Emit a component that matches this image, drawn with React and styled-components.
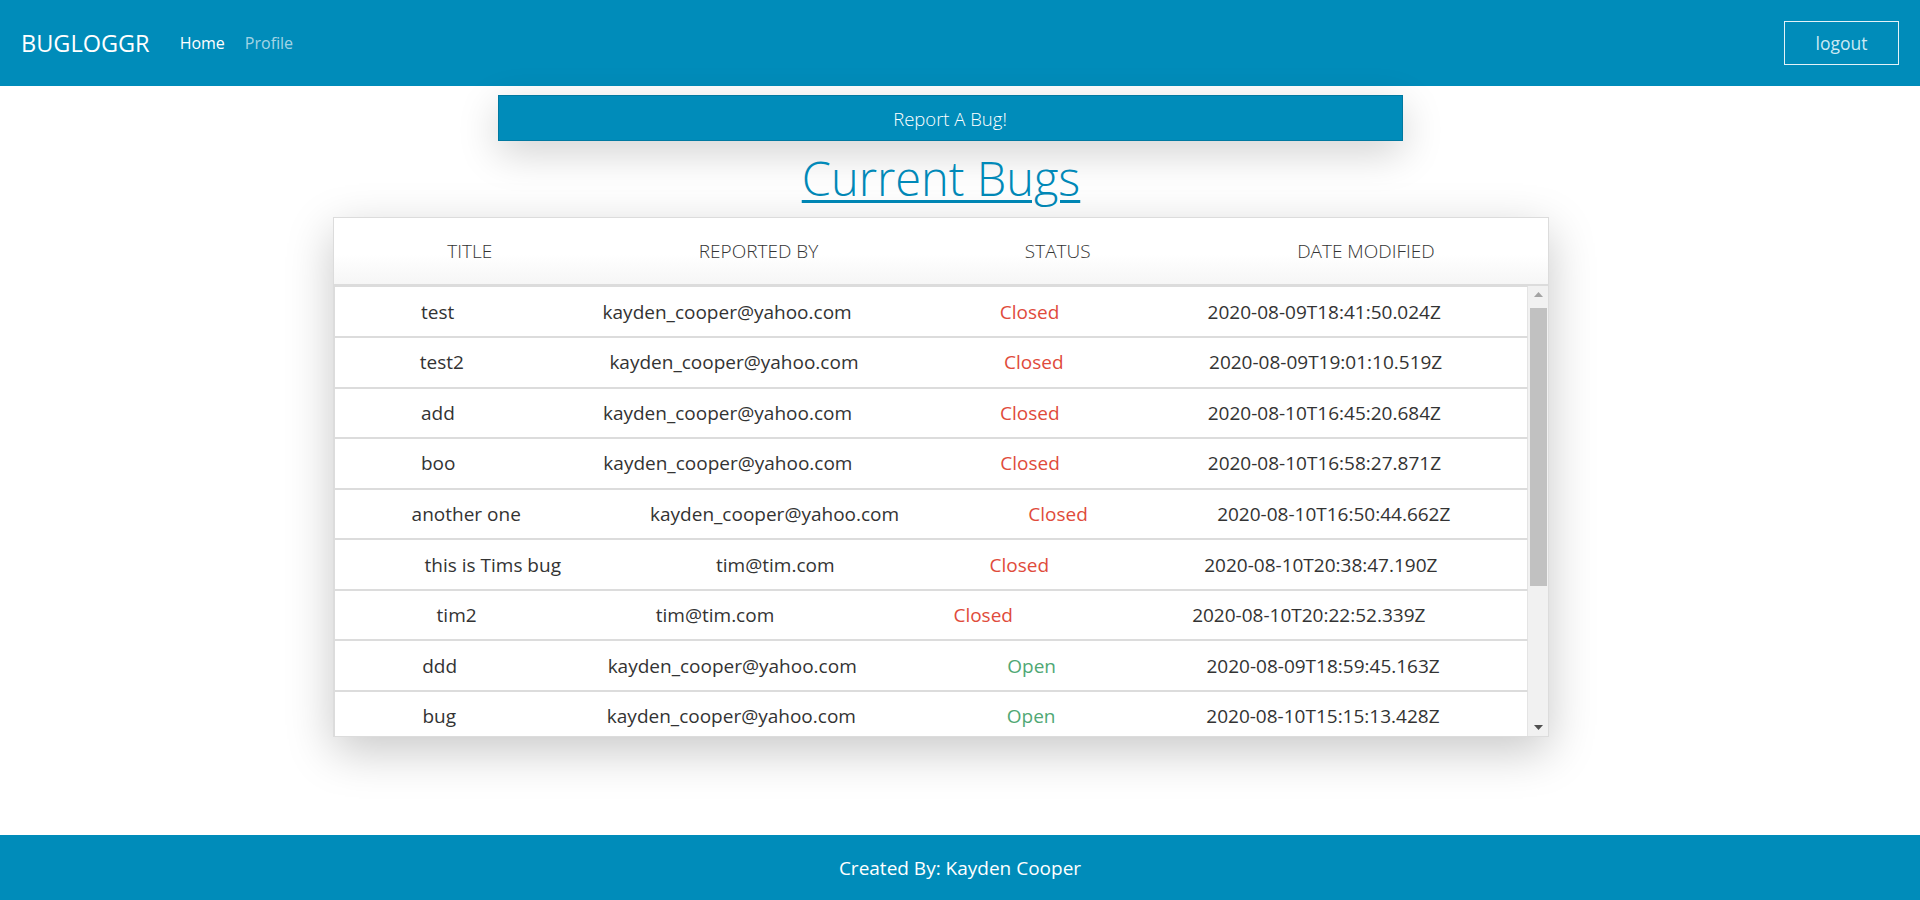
import styled, { createGlobalStyle } from "styled-components";

const bugs = [
  { id: 1, title: "test", reportedBy: "kayden_cooper@yahoo.com", closed: true, modified: "2020-08-09T18:41:50.024Z" },
  { id: 2, title: "test2", reportedBy: "kayden_cooper@yahoo.com", closed: true, modified: "2020-08-09T19:01:10.519Z" },
  { id: 3, title: "add", reportedBy: "kayden_cooper@yahoo.com", closed: true, modified: "2020-08-10T16:45:20.684Z" },
  { id: 4, title: "boo", reportedBy: "kayden_cooper@yahoo.com", closed: true, modified: "2020-08-10T16:58:27.871Z" },
  { id: 5, title: "another one", reportedBy: "kayden_cooper@yahoo.com", closed: true, modified: "2020-08-10T16:50:44.662Z" },
  { id: 6, title: "this is Tims bug", reportedBy: "tim@tim.com", closed: true, modified: "2020-08-10T20:38:47.190Z" },
  { id: 7, title: "tim2", reportedBy: "tim@tim.com", closed: true, modified: "2020-08-10T20:22:52.339Z" },
  { id: 8, title: "ddd", reportedBy: "kayden_cooper@yahoo.com", closed: false, modified: "2020-08-09T18:59:45.163Z" },
  { id: 9, title: "bug", reportedBy: "kayden_cooper@yahoo.com", closed: false, modified: "2020-08-10T15:15:13.428Z" },
];

export default function App() {
  return (
    <>
      <GlobalStyle />
      <Page>
        <Navbar>
          <Brand>BUGLOGGR</Brand>
          <NavLink>Home</NavLink>
          <NavLink muted>Profile</NavLink>
          <LogoutBtn>logout</LogoutBtn>
        </Navbar>

        <Main>
          <ReportBtn>Report A Bug!</ReportBtn>
          <Title>Current Bugs</Title>
          <BugTable>
            <HeadRow>
              <span>Title</span>
              <span>Reported By</span>
              <span>Status</span>
              <span>Date Modified</span>
            </HeadRow>
            <BodyArea>
              <RowList>
                {bugs.map((bug) => (
                  <BugRow key={bug.id}>
                    <span>{bug.title}</span>
                    <span>{bug.reportedBy}</span>
                    <Status closed={bug.closed}>{bug.closed ? "Closed" : "Open"}</Status>
                    <span>{bug.modified}</span>
                  </BugRow>
                ))}
              </RowList>
              <ScrollTrack>
                <ScrollArrow>
                  <svg width="9" height="5" viewBox="0 0 9 5">
                    <path d="M0 5 L4.5 0 L9 5 Z" fill="#a3a3a3" />
                  </svg>
                </ScrollArrow>
                <ScrollThumb />
                <ScrollArrow>
                  <svg width="9" height="5" viewBox="0 0 9 5">
                    <path d="M0 0 L9 0 L4.5 5 Z" fill="#505050" />
                  </svg>
                </ScrollArrow>
              </ScrollTrack>
            </BodyArea>
          </BugTable>
        </Main>

        <Footer>Created By: Kayden Cooper</Footer>
      </Page>
    </>
  );
}

const GlobalStyle = createGlobalStyle`
  body {
    margin: 0;
    font-family: "Open Sans", "Liberation Sans", sans-serif;
    color: #222;
    background: #fff;
  }
`;

const Page = styled.div`
  min-height: 100vh;
  display: flex;
  flex-direction: column;
`;

const Navbar = styled.nav`
  height: 86px;
  background-color: #008cba;
  display: flex;
  align-items: center;
  padding: 0 21px;
  box-sizing: border-box;
`;

const Brand = styled.div`
  font-size: 23.5px;
  color: #fff;
  margin-right: 30px;
`;

const NavLink = styled.a`
  font-size: 16px;
  color: ${(p) => (p.muted ? "rgba(255, 255, 255, 0.65)" : "#fff")};
  margin-right: 20px;
  cursor: pointer;
`;

const LogoutBtn = styled.button`
  margin-left: auto;
  width: 115px;
  height: 44px;
  background: transparent;
  border: 1px solid #e3f2f8;
  color: #cbe9f4;
  font-family: inherit;
  font-size: 17.5px;
  cursor: pointer;
`;

const Main = styled.main`
  display: flex;
  flex-direction: column;
  align-items: center;
  padding: 9px 38px 0 0;
`;

const ReportBtn = styled.button`
  width: 905px;
  height: 46px;
  margin-left: 18px;
  background-color: #008cba;
  border: 1px solid #0079a1;
  color: #fff;
  font-family: inherit;
  font-weight: 300;
  font-size: 18.5px;
  box-shadow: 0 12px 40px rgba(0, 0, 0, 0.18);
  cursor: pointer;
`;

const Title = styled.h1`
  margin: 9px 0 10px;
  font-size: 47px;
  line-height: 1.22;
  font-weight: 300;
  color: #0089b8;
  text-decoration: underline;
  text-decoration-thickness: 3px;
  text-underline-offset: 4px;
`;

const BugTable = styled.div`
  width: 1216px;
  border: 1px solid #dcdcdc;
  box-sizing: border-box;
  background: #fff;
  box-shadow: 0 14px 44px rgba(0, 0, 0, 0.22);
`;

const HeadRow = styled.div`
  height: 66px;
  padding: 0 10px;
  display: flex;
  justify-content: space-around;
  align-items: center;
  text-transform: uppercase;
  font-size: 19px;
  font-weight: 300;
  color: #333;
  background: linear-gradient(#fff 55%, #f6f6f6);
  border-bottom: 2px solid #dcdcdc;
`;

const BodyArea = styled.div`
  height: 450px;
  display: flex;
  overflow: hidden;
`;

const RowList = styled.div`
  flex: 1;
  min-width: 0;
`;

const BugRow = styled.div`
  display: flex;
  justify-content: space-around;
  align-items: center;
  padding: 11.3px 12px;
  line-height: 26px;
  font-size: 19px;
  color: #333;
  background: #fff;
  border: 1px solid #dcdcdc;
  border-right-color: #e4e4e4;
`;

const Status = styled.span`
  color: ${(p) => (p.closed ? "#e04b3b" : "#4fa874")};
`;

const ScrollTrack = styled.div`
  width: 20px;
  flex-shrink: 0;
  background: #f1f1f1;
  display: flex;
  flex-direction: column;
  align-items: center;
  padding-left: 1px;
  box-sizing: border-box;
`;

const ScrollArrow = styled.div`
  height: 17px;
  width: 100%;
  display: flex;
  align-items: center;
  justify-content: center;
  flex-shrink: 0;
`;

const ScrollThumb = styled.div`
  width: 17px;
  height: 278px;
  margin-top: 5px;
  margin-bottom: auto;
  background: #c1c1c1;
`;

const Footer = styled.footer`
  margin-top: auto;
  height: 65px;
  background-color: #008cba;
  color: #fff;
  font-size: 19px;
  display: flex;
  align-items: center;
  justify-content: center;
`;
